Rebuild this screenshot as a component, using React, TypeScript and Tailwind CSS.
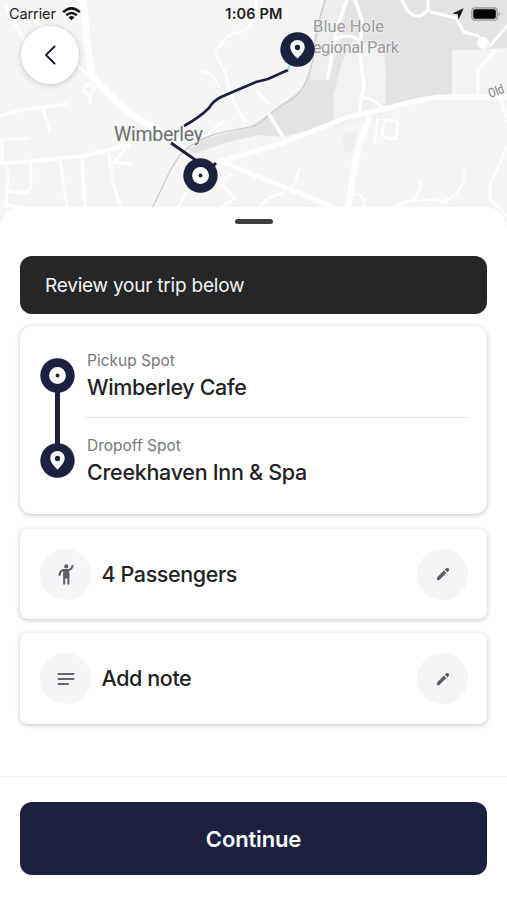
import React from 'react';

const PickupIcon: React.FC = () => (
  <svg width="35" height="35" viewBox="0 0 35 35">
    <circle cx="17.5" cy="17.5" r="17.2" fill="#1c2140" />
    <circle cx="17.5" cy="17.5" r="8.4" fill="#fff" />
    <circle cx="17.5" cy="17.5" r="1.9" fill="#1c2140" />
  </svg>
);

const DropoffIcon: React.FC = () => (
  <svg width="35" height="35" viewBox="0 0 35 35">
    <circle cx="17.5" cy="17.5" r="17.2" fill="#1c2140" />
    <path
      d="M17.5 8c-4.1 0-7.2 3.1-7.2 7.1 0 4.6 4 8.2 7.2 11.6 3.2-3.4 7.2-7 7.2-11.6C24.7 11.1 21.6 8 17.5 8z"
      fill="#fff"
    />
    <circle cx="17.5" cy="15.5" r="2.7" fill="#1c2140" />
  </svg>
);

const PersonIcon: React.FC = () => (
  <svg width="16" height="21" viewBox="0 0 16 21" fill="none" stroke="#5d5d66" strokeWidth="2" strokeLinejoin="round">
    <circle cx="8.3" cy="2.4" r="2.1" fill="#5d5d66" stroke="none" />
    <path d="M1.4 11.600C1.600 8 3.200 6.300 6 6h4.500C13 5.600 14.300 4 14.600 1.200" />
    <path d="M5.200 5.500h6V13h-6z" fill="#5d5d66" stroke="none" />
    <path d="M6.200 10v10.500M10.400 10v10.500M6 13.500h4.500" />
  </svg>
);

const PencilIcon: React.FC = () => (
  <svg width="14" height="14" viewBox="0 0 14 14" stroke="#5d5d66" strokeWidth="3.500">
    <path d="M2.400 11.600 9.200 4.800" />
    <path d="M2.300 11.700h.01" strokeWidth="3" strokeLinecap="round" />
    <path d="M10.100 3.900 11.700 2.300" strokeLinecap="butt" />
    <path d="M11.400 2.600h.01" strokeWidth="3.300" strokeLinecap="round" />
    <path d="M8.300 3.300 10.700 5.700" stroke="#f5f5f8" strokeWidth=".7" />
  </svg>
);

const NoteIcon: React.FC = () => (
  <svg width="18" height="14" viewBox="0 0 18 14" stroke="#66666e" strokeWidth="2.2" strokeLinecap="round">
    <path d="M1.5 2h15M1.5 7h15M1.5 12h9.5" />
  </svg>
);

const TripMap: React.FC = () => (
  <svg width="507" height="236" viewBox="0 0 507 236" fill="none" className="block">
    <rect width="507" height="236" fill="#f5f5f5" />

    {/* Park areas */}
    <path d="M325 0H507V50H452V98H430Q402 101 380 114L330 124 283 137 258 135 225 143 196 153 188 150 204 139 250 127 273 111 303 88 311 72 314 50 318 25z" fill="#e3e3e3" />
    <path d="M326 0H347L341 40 328 80H310L315 50z" fill="#eeeeee" />
    <path d="M342 62L352 42 384 45 386 78 385 108 370 120 334 128 333 96z" fill="#f1f1f1" />
    <path d="M452 51L507 48V98H452z" fill="#f4f4f4" />
    <path d="M342 135L358 130 352 152H344z" fill="#eeeeee" />

    {/* Creek */}
    <path d="M152 208C163 188 170 165 184 151C204 133 230 131 250 127C264 124 270 110 289 101C305 92 309 74 313 60C314 36 319 18 325 0" stroke="#c8c8c8" strokeWidth="1.2" />

    {/* Main roads */}
    <g stroke="#ffffff" strokeLinecap="round" strokeLinejoin="round">
      <path d="M83 0L88 50 92 76C112 100 130 116 151 126L180 142" strokeWidth="7" />
      <path d="M222 162L262 178 340 210" strokeWidth="5" />
      <path d="M218 162L250 153 285 142 348 117C382 112 407 100 440 97H507" strokeWidth="5" />
      <path d="M369 119C356 148 353 174 348 208" strokeWidth="6.5" />
      <path d="M0 163L24 162 84 156 128 145" strokeWidth="4" />
    </g>

    {/* Side streets */}
    <g stroke="#fefefe" strokeWidth="3" strokeLinecap="round" strokeLinejoin="round">
      <path d="M0 116L22 110 66 104M43 109L49 130M0 140 29 138M2 142V160L8 172 6 205 38 210M31 162V183Q31 193 22 193L8 191" />
      <path d="M60 160L67 208M82 158L85 208M109 152Q110 180 121 208M118 163L132 164M128 145L114 163" />
      <path d="M6 5L26 44M35 22L52 30M78 66L94 80M84 89Q84 84 91 85 97 89 91 93 84 95 84 89zM90 94V102" strokeWidth="3.5" />
      <path d="M256 0Q256 28 240 32L229 35 215 51 226 75 233 100 238 110 245 121M201 71Q213 72 219 87M204 136L224 121" strokeWidth="2.500" />
      <path d="M257 92L268 103M269 114L283 137M347 0L336 30 328 78M355 0L362 20 360 55 364 85 359 113M336 38Q355 32 361 44" strokeWidth="3.5" />
      <path d="M361 98Q377 98 383 111M378 119L374 142M385 121Q399 118 398 126L396 138Q386 141 382 134 382 128 385 121" />
      <path d="M402 0L407 10Q418 22 428 10V0M431 12L456 18 464 32 478 36 484 42M507 26L490 46M480 67L496 50M478 68V96M500 99L507 120" />
      <circle cx="483" cy="43" r="4.5" fill="#fff" />
      <path d="M507 145L500 163 490 183V200L507 216M299 170L293 186 280 194Q264 198 260 207M293 192Q315 199 328 208M394 207Q409 199 420 201 430 197 441 202 464 196 465 168M420 180Q422 190 413 200M350 195Q364 190 364 206" strokeWidth="2.5" />
      <path d="M222 185L235 198 219 208M188 190L178 207M231 175L221 181" strokeWidth="2.5" />
    </g>

    {/* Route */}
    <path d="M171 143L200 163 202 177 216 163" stroke="#1c2140" strokeWidth="3" />
    <path d="M184 126C193 121 201 116 209 108Q213 101 221 97L256 82 268 79 288 70" stroke="#1c2140" strokeWidth="2.6" />
    <path d="M288 70L290 64" stroke="#9ddbd2" strokeWidth="2" />

    <g fontFamily="Roboto, sans-serif" stroke="#f4f4f4" strokeWidth="1.5" paintOrder="stroke">
      <text x="114" y="141" fontSize="19.5" fill="#707070" textLength="89">Wimberley</text>
      <text x="313" y="32" fontSize="16.5" fill="#9b9b9b" textLength="71">Blue Hole</text>
      <text x="303" y="53" fontSize="16.5" fill="#9b9b9b" textLength="96">Regional Park</text>
      <text x="490" y="98" fontSize="13" fill="#808080" textLength="16" lengthAdjust="spacingAndGlyphs" transform="rotate(-20 490 98)">Old</text>
    </g>
  </svg>
);

const StatusBar: React.FC = () => (
  <div className="absolute inset-x-0 top-0 flex h-7 items-center pl-[9px] pr-[8px] text-[14.5px] text-[#1d1d1d]">
    <div className="flex flex-1 items-center gap-[6px]">
      <span className="tracking-[-0.1px]">Carrier</span>
      <svg width="19" height="14" viewBox="0 0 19 14" fill="none" stroke="#111" strokeWidth="2.5">
        <path d="M1.2 5.2Q9.5-2.5 17.8 5.2M4.2 8.3Q9.5 3.6 14.8 8.3" />
        <path d="M6.5 10.3Q9.5 7.8 12.5 10.3L9.5 13.3z" fill="#111" stroke="none" />
      </svg>
    </div>
    <span className="text-[14.5px] font-semibold tracking-[0.2px]">1:06 PM</span>
    <div className="flex flex-1 items-center justify-end gap-[7px]">
      <svg width="12" height="12" viewBox="0 0 12 12" fill="#111">
        <path d="M11.7.3 6.5 11.7 5.900 6.300.3 5.600z" />
      </svg>
      <svg width="30" height="14" viewBox="0 0 30 14" className="-mr-[2px]">
        <rect x=".8" y=".8" width="25.5" height="12.4" rx="3.5" fill="#d0d0d0" stroke="#999" strokeWidth="1.2" />
        <rect x="2.3" y="2.3" width="22.5" height="9.4" rx="2" fill="#050505" />
        <path d="M27.6 4.8q3 2.2 0 4.4z" fill="#999" />
      </svg>
    </div>
  </div>
);

const OptionRow: React.FC<{ icon: React.ReactNode; label: string; className: string }> = ({
  icon,
  label,
  className,
}) => (
  <div className={`flex items-center rounded-lg bg-white pl-5 pr-[19px] shadow-[0_1px_5px_rgba(0,0,0,0.24)] ${className}`}>
    <div className="flex size-[51px] items-center justify-center rounded-full bg-[#f5f5f8]">
      {icon}
    </div>
    <span className="ml-[10.5px] flex-1 text-[21.5px] font-medium tracking-[-0.4px]">{label}</span>
    <button className="flex size-[51px] items-center justify-center rounded-full bg-[#f5f5f8]">
      <PencilIcon />
    </button>
  </div>
);

const App: React.FC = () => {
  return (
    <div className="flex h-[900px] w-[507px] flex-col overflow-hidden bg-white font-['Inter',sans-serif] text-[#222224]">
      <div className="relative h-[207px] shrink-0">
        <TripMap />
        <StatusBar />
        <button className="absolute left-[21px] top-[26px] flex size-[58px] items-center justify-center rounded-full bg-white shadow-[0_1px_6px_rgba(0,0,0,0.2)]">
          <svg width="12" height="20" viewBox="0 0 12 20" fill="none" stroke="#1c2140" strokeWidth="2" strokeLinecap="round" strokeLinejoin="round">
            <path d="M10.5 1.5 2 10l8.5 8.5" />
          </svg>
        </button>
        <div className="absolute left-[280px] top-[32px]">
          <DropoffIcon />
        </div>
        <div className="absolute left-[183px] top-[158px]">
          <PickupIcon />
        </div>
      </div>

      <div className="relative flex flex-1 flex-col rounded-t-[22px] bg-white px-5">
        <div className="mx-auto mt-[12px] h-[5px] w-[38px] rounded-full bg-[#404040]" />

        <div className="mt-[32px] flex h-[58px] items-center rounded-xl bg-[#242627] px-[25px] pt-[2px] text-[19px] tracking-[-0.22px] text-[#f4f4f4]">
          <span>Review your trip below</span>
        </div>

        {/* Trip stops */}
        <div className="mt-[12px] flex h-[188px] rounded-xl bg-white pl-5 pr-[19px] pt-[32px] shadow-[0_1px_5px_rgba(0,0,0,0.24)]">
          <div className="flex w-[35px] flex-col items-center">
            <PickupIcon />
            <div className="-my-px h-[52px] w-[5px] bg-[#1c2140]" />
            <DropoffIcon />
          </div>
          <div className="-mt-[7px] ml-[11px] flex-1">
            <div className="h-[67px] border-b border-[#e6e6e6] pl-px">
              <p className="text-[15.5px] leading-[20px] text-[#77777d]">Pickup Spot</p>
              <p className="mt-[1px] text-[21.5px] font-medium leading-[30px] tracking-[-0.37px]">Wimberley Cafe</p>
            </div>
            <div className="pl-px pt-[18px]">
              <p className="text-[15.5px] leading-[20px] text-[#77777d]">Dropoff Spot</p>
              <p className="mt-[1px] text-[21.5px] font-medium leading-[30px] tracking-[-0.3px]">Creekhaven Inn &amp; Spa</p>
            </div>
          </div>
        </div>

        <OptionRow className="mt-[15px] h-[90px]" icon={<PersonIcon />} label="4 Passengers" />
        <OptionRow className="mt-[14px] h-[91px]" icon={<NoteIcon />} label="Add note" />

        <div className="-mx-5 mt-[52px] border-t border-[#f0f0f0] px-5 pt-[25px]">
          <button className="h-[73px] w-full rounded-xl bg-[#1c2140] pt-[2px] text-[22px] font-semibold tracking-[-0.15px] text-white">
            Continue
          </button>
        </div>
      </div>
    </div>
  );
};

export default App;
